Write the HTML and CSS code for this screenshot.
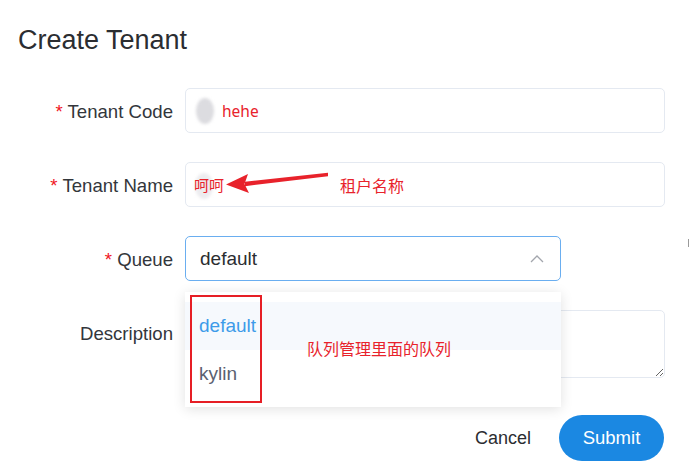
FILE: index.html
```html
<!DOCTYPE html>
<html lang="en">
<head>
<meta charset="utf-8">
<title>Create Tenant</title>
<link rel="stylesheet" href="styles.css">
</head>
<body>
<div class="dialog">
  <h1 class="title">Create Tenant</h1>
  <div class="form">
    <label class="label"><span class="req">*</span> Tenant Code</label>
    <div class="field">
      <div class="input">
        <span class="blob"></span>
        <span class="note-val">hehe</span>
      </div>
    </div>

    <label class="label"><span class="req">*</span> Tenant Name</label>
    <div class="field">
      <div class="input input-name">
        <span class="blob blob-faint"></span>
        <span class="note-val cjk">呵呵</span>
      </div>
      <svg class="arrow" width="120" height="24" viewBox="0 0 120 24">
        <path d="M103 2.8 L20 11.8 L20 16.2 L103 6.2 Z" fill="#e8222b"/>
        <path d="M1 14.5 L23 4 L19.5 14 L24 23 Z" fill="#e8222b"/>
      </svg>
      <span class="note note-name">租户名称</span>
    </div>

    <label class="label"><span class="req">*</span> Queue</label>
    <div class="field">
      <div class="select">
        <span class="select-val">default</span>
        <svg class="chev" width="14" height="8" viewBox="0 0 14 8"><path d="M1 7 L7 1 L13 7" fill="none" stroke="#a3a6ad" stroke-width="1.3"/></svg>
        <div class="dropdown">
          <div class="option active">default</div>
          <div class="option">kylin</div>
          <span class="redbox"></span>
          <span class="note note-queue">队列管理里面的队列</span>
        </div>
      </div>
    </div>

    <label class="label">Description</label>
    <div class="field">
      <textarea class="textarea"></textarea>
    </div>
  </div>
  <div class="actions">
    <button class="btn-cancel">Cancel</button>
    <button class="btn-submit">Submit</button>
  </div>
  <span class="edge-mark"></span>
</div>
</body>
</html>
```

FILE: styles.css
```css
html, body {
  margin: 0;
  padding: 0;
  background: #ffffff;
}

body {
  font-family: "Liberation Sans", Arial, sans-serif;
  color: #303133;
  width: 690px;
  height: 475px;
  overflow: hidden;
}

.dialog {
  position: relative;
  padding-top: 25px;
}

.title {
  margin: 0 0 33px 18px;
  font-size: 27px;
  line-height: 30px;
  font-weight: normal;
  color: #2b2d31;
}

.form {
  display: grid;
  grid-template-columns: 173px 480px;
  column-gap: 12px;
  row-gap: 29px;
}

.label {
  font-size: 18.6px;
  line-height: 47px;
  height: 45px;
  text-align: right;
  color: #33363b;
  white-space: nowrap;
}

.req {
  color: #f0141e;
}

.field {
  position: relative;
}

.input {
  box-sizing: border-box;
  height: 45px;
  border: 1px solid #e4e9f1;
  border-radius: 5px;
  display: flex;
  align-items: center;
  padding-left: 10px;
}

.blob {
  width: 18px;
  height: 26px;
  border-radius: 50%;
  background: #dcdce0;
  filter: blur(1.5px);
  margin-right: 8px;
  flex: none;
}

.blob-faint {
  background: #ececef;
  position: absolute;
  margin: 0;
  left: 9px;
  top: 10px;
}

.input-name {
  padding-left: 8px;
  position: relative;
}

.note-val {
  position: relative;
  color: #e8222b;
  font-size: 15.5px;
  font-family: "Noto Sans", "Noto Sans CJK SC", sans-serif;
}

.cjk {
  font-family: "Noto Sans CJK SC", sans-serif;
  font-size: 15px;
}

.arrow {
  position: absolute;
  left: 40px;
  top: 8px;
}

.note {
  position: absolute;
  color: #e8222b;
  font-family: "Noto Sans CJK SC", sans-serif;
  font-size: 16px;
  line-height: 22px;
  white-space: nowrap;
}

.note-name {
  left: 155px;
  top: 12px;
}

.select {
  position: relative;
  box-sizing: border-box;
  width: 376px;
  height: 45px;
  border: 1px solid #6aaef0;
  border-radius: 5px;
  display: flex;
  align-items: center;
  padding-left: 14px;
}

.select-val {
  font-size: 19px;
  color: #2b2d31;
}

.chev {
  position: absolute;
  right: 16px;
  top: 18px;
}

.dropdown {
  position: absolute;
  left: -1px;
  top: 55px;
  width: 376px;
  box-sizing: border-box;
  padding: 10px 0 9px;
  background: #ffffff;
  box-shadow: 0 2px 12px rgba(0, 0, 0, 0.12);
  z-index: 2;
}

.option {
  height: 48px;
  line-height: 48px;
  padding-left: 14px;
  font-size: 19px;
  color: #5a6170;
}

.option.active {
  background: #f6f9fd;
  color: #3d9be9;
}

.redbox {
  position: absolute;
  left: 5px;
  top: 3px;
  width: 68px;
  height: 104px;
  border: 2px solid #e61e25;
}

.note-queue {
  left: 122px;
  top: 45px;
}

.textarea {
  display: block;
  box-sizing: border-box;
  width: 480px;
  height: 68px;
  border: 1px solid #e4e9f1;
  border-radius: 5px;
  margin: 0;
  padding: 8px 12px;
  font-family: inherit;
  font-size: 16px;
  resize: vertical;
  outline: none;
}

.actions {
  display: flex;
  justify-content: flex-end;
  align-items: center;
  gap: 28px;
  margin-top: 37px;
  padding-right: 26px;
}

.btn-cancel {
  border: none;
  background: none;
  padding: 0;
  font-family: inherit;
  font-size: 18px;
  color: #2b2d31;
}

.btn-submit {
  width: 105px;
  height: 46px;
  border: none;
  border-radius: 23px;
  background: #1b88e2;
  color: #ffffff;
  font-family: inherit;
  font-size: 18.5px;
}

.edge-mark {
  position: absolute;
  left: 688px;
  top: 239px;
  width: 1px;
  height: 8px;
  background: #9a9a9a;
}
```
